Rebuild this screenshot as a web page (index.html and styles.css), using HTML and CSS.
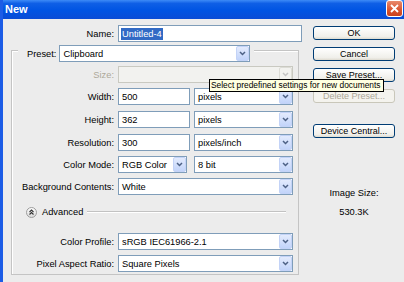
FILE: index.html
```html
<!DOCTYPE html>
<html lang="en">
<head>
    <meta charset="UTF-8">
    <title>New</title>
    <link rel="stylesheet" href="styles.css">
</head>
<body>
    <div class="window">
        <div class="titlebar">
            <span class="title">New</span>
            <span class="close">
                <svg width="9" height="9" viewBox="0 0 9 9"><path d="M1 1 L8 8 M8 1 L1 8" stroke="#fff" stroke-width="1.8" fill="none"/></svg>
            </span>
        </div>
        <div class="body">
            <div class="left">
                <div class="row name-row">
                    <label class="lbl">Name:</label>
                    <div class="field name-field"><span class="sel">Untitled-4</span></div>
                </div>
                <div class="group">
                    <div class="preset">
                        <label>Preset:</label>
                        <div class="field preset-field"><span>Clipboard</span><span class="arrow"><svg width="7" height="5" viewBox="0 0 7 5"><path d="M1 1 L3.5 3.5 L6 1" stroke="#4d6185" stroke-width="1.5" fill="none"/></svg></span></div>
                    </div>
                    <div class="row size-row">
                        <label class="lbl disabled">Size:</label>
                        <div class="field full off"><span></span><span class="arrow"><svg width="7" height="5" viewBox="0 0 7 5"><path d="M1 1 L3.5 3.5 L6 1" stroke="#c4c4c4" stroke-width="1.5" fill="none"/></svg></span></div>
                    </div>
                    <div class="row">
                        <label class="lbl">Width:</label>
                        <div class="field num">500</div>
                        <div class="field unit"><span>pixels</span><span class="arrow"><svg width="7" height="5" viewBox="0 0 7 5"><path d="M1 1 L3.5 3.5 L6 1" stroke="#4d6185" stroke-width="1.5" fill="none"/></svg></span></div>
                    </div>
                    <div class="row wide-gap">
                        <label class="lbl">Height:</label>
                        <div class="field num">362</div>
                        <div class="field unit"><span>pixels</span><span class="arrow"><svg width="7" height="5" viewBox="0 0 7 5"><path d="M1 1 L3.5 3.5 L6 1" stroke="#4d6185" stroke-width="1.5" fill="none"/></svg></span></div>
                    </div>
                    <div class="row wide-gap">
                        <label class="lbl">Resolution:</label>
                        <div class="field num">300</div>
                        <div class="field unit"><span>pixels/inch</span><span class="arrow"><svg width="7" height="5" viewBox="0 0 7 5"><path d="M1 1 L3.5 3.5 L6 1" stroke="#4d6185" stroke-width="1.5" fill="none"/></svg></span></div>
                    </div>
                    <div class="row">
                        <label class="lbl">Color Mode:</label>
                        <div class="field mode"><span>RGB Color</span><span class="arrow"><svg width="7" height="5" viewBox="0 0 7 5"><path d="M1 1 L3.5 3.5 L6 1" stroke="#4d6185" stroke-width="1.5" fill="none"/></svg></span></div>
                        <div class="field bits"><span>8 bit</span><span class="arrow"><svg width="7" height="5" viewBox="0 0 7 5"><path d="M1 1 L3.5 3.5 L6 1" stroke="#4d6185" stroke-width="1.5" fill="none"/></svg></span></div>
                    </div>
                    <div class="row">
                        <label class="lbl">Background Contents:</label>
                        <div class="field full"><span>White</span><span class="arrow"><svg width="7" height="5" viewBox="0 0 7 5"><path d="M1 1 L3.5 3.5 L6 1" stroke="#4d6185" stroke-width="1.5" fill="none"/></svg></span></div>
                    </div>
                    <div class="advanced">
                        <svg class="adv-icon" width="11" height="11" viewBox="0 0 11 11">
                            <defs><linearGradient id="g" x1="0" y1="0" x2="0" y2="1"><stop offset="0" stop-color="#ffffff"/><stop offset="1" stop-color="#d8d8d8"/></linearGradient></defs>
                            <circle cx="5.5" cy="5.5" r="5" fill="url(#g)" stroke="#9c9c9c"/>
                            <path d="M3.5 5 L5.5 3 L7.5 5 M3.5 7.5 L5.5 5.5 L7.5 7.5" stroke="#333" stroke-width="1.1" fill="none"/>
                        </svg>
                        <span>Advanced</span>
                        <span class="rule"></span>
                    </div>
                    <div class="row profile-row">
                        <label class="lbl">Color Profile:</label>
                        <div class="field full"><span>sRGB IEC61966-2.1</span><span class="arrow"><svg width="7" height="5" viewBox="0 0 7 5"><path d="M1 1 L3.5 3.5 L6 1" stroke="#4d6185" stroke-width="1.5" fill="none"/></svg></span></div>
                    </div>
                    <div class="row">
                        <label class="lbl">Pixel Aspect Ratio:</label>
                        <div class="field full"><span>Square Pixels</span><span class="arrow"><svg width="7" height="5" viewBox="0 0 7 5"><path d="M1 1 L3.5 3.5 L6 1" stroke="#4d6185" stroke-width="1.5" fill="none"/></svg></span></div>
                    </div>
                </div>
            </div>
            <div class="right">
                <div class="btn">OK</div>
                <div class="btn">Cancel</div>
                <div class="btn">Save Preset...</div>
                <div class="btn disabled">Delete Preset...</div>
                <div class="btn device">Device Central...</div>
                <div class="img-size">Image Size:</div>
                <div class="img-value">530.3K</div>
            </div>
        </div>
        <div class="tooltip">Select predefined settings for new documents</div>
    </div>
</body>
</html>
```

FILE: styles.css
```css
body {
    margin: 0;
    background-color: #ececec;
    font-family: "Liberation Sans", Arial, sans-serif;
    font-size: 9.3px;
    color: #000;
}
.window {
    position: relative;
    width: 404px;
    height: 282px;
    box-sizing: border-box;
    border-left: 3px solid #1c5ce6;
    background-color: #ececec;
    overflow: hidden;
}
.titlebar {
    height: 19px;
    display: flex;
    justify-content: space-between;
    padding-left: 2px;
    background: linear-gradient(to bottom, #3d8bf7 0%, #0f5fe6 18%, #0054e3 55%, #0a4cd6 100%);
}
.title {
    color: #fff;
    font-size: 11px;
    font-weight: bold;
    line-height: 19px;
}
.close {
    width: 17px;
    height: 17px;
    margin-right: 1px;
    box-sizing: border-box;
    border: 1px solid #fff;
    border-radius: 3px;
    background: linear-gradient(to bottom, #e98a6c, #d9532f 60%, #c8421f);
    display: flex;
    align-items: center;
    justify-content: center;
}
.body {
    display: flex;
    padding: 6px 0 0 8px;
}
.left {
    width: 291px;
}
.right {
    width: 82px;
    margin-left: 11px;
    padding-top: 1px;
    display: flex;
    flex-direction: column;
}

/* form rows */
.row {
    display: flex;
    align-items: center;
    height: 17px;
    margin-top: 5px;
}
.row.wide-gap {
    margin-top: 6px;
}
.name-row {
    margin-top: 0;
}
.lbl {
    width: 102px;
    margin-right: 4px;
    text-align: right;
    white-space: nowrap;
}
.name-row .lbl {
    width: 103px;
}
.lbl.disabled {
    color: #aca899;
}
.field {
    height: 17px;
    box-sizing: border-box;
    border: 1px solid #7f9db9;
    background-color: #fff;
    display: flex;
    align-items: center;
    padding-left: 3px;
    line-height: 12px;
    white-space: nowrap;
}
.arrow {
    margin-left: auto;
    width: 13px;
    height: 15px;
    box-sizing: border-box;
    border: 1px solid #c3d3f7;
    border-radius: 2px;
    background: linear-gradient(to bottom, #e3ebfd, #c2d4fa);
    display: flex;
    align-items: center;
    justify-content: center;
}
.field.off {
    background-color: #f2f2ef;
    border-color: #c9c9c1;
}
.field.off .arrow {
    background: #f2f2ef;
    border-color: #dcdcd6;
}
.name-field {
    width: 184px;
}
.sel {
    background-color: #316ac5;
    color: #fff;
    padding: 0 1px;
    margin-left: -1px;
}
.full {
    width: 175px;
}
.num {
    width: 72px;
    margin-right: 4px;
}
.unit {
    width: 99px;
}
.mode {
    width: 69px;
    margin-right: 7px;
}
.bits {
    width: 99px;
}

/* group box */
.group {
    margin-top: 8px;
    width: 288px;
    box-sizing: border-box;
    border: 1px solid #c4c4c4;
    box-shadow: inset 1px 1px 0 #fff;
    padding-bottom: 2px;
}
.preset {
    display: flex;
    align-items: center;
    height: 17px;
    width: max-content;
    margin: -6px 0 0 6px;
    padding-right: 4px;
    background-color: #ececec;
}
.preset label {
    margin: 0 3px 0 9px;
}
.preset-field {
    width: 191px;
}
.size-row {
    margin-top: 4px;
}
.advanced {
    display: flex;
    align-items: center;
    height: 12px;
    margin-top: 11px;
    padding-left: 14px;
}
.adv-icon {
    margin-right: 5px;
}
.rule {
    flex: 1;
    margin: 0 12px 0 4px;
    border-top: 1px solid #c2c2c2;
    border-bottom: 1px solid #fff;
}
.profile-row {
    margin-top: 15px;
}

/* buttons */
.btn {
    height: 14px;
    box-sizing: border-box;
    margin-bottom: 7px;
    border: 1px solid #003c74;
    border-radius: 3px;
    background: linear-gradient(to bottom, #ffffff, #f0efea 80%, #dedbd0);
    text-align: center;
    line-height: 12px;
    font-size: 9px;
}
.btn.disabled {
    border-color: #c9c7ba;
    color: #aca899;
    background: #f4f3ee;
}
.btn.device {
    margin-top: 14px;
}
.img-size {
    margin-top: 42px;
    text-align: center;
    line-height: 12px;
}
.img-value {
    margin-top: 7px;
    text-align: center;
    line-height: 12px;
}

.tooltip {
    position: absolute;
    left: 206px;
    top: 79px;
    height: 13px;
    box-sizing: border-box;
    padding: 0 3px 0 1px;
    border: 1px solid #000;
    background-color: #ffffe1;
    font-size: 8.4px;
    line-height: 11px;
    white-space: nowrap;
}
```
